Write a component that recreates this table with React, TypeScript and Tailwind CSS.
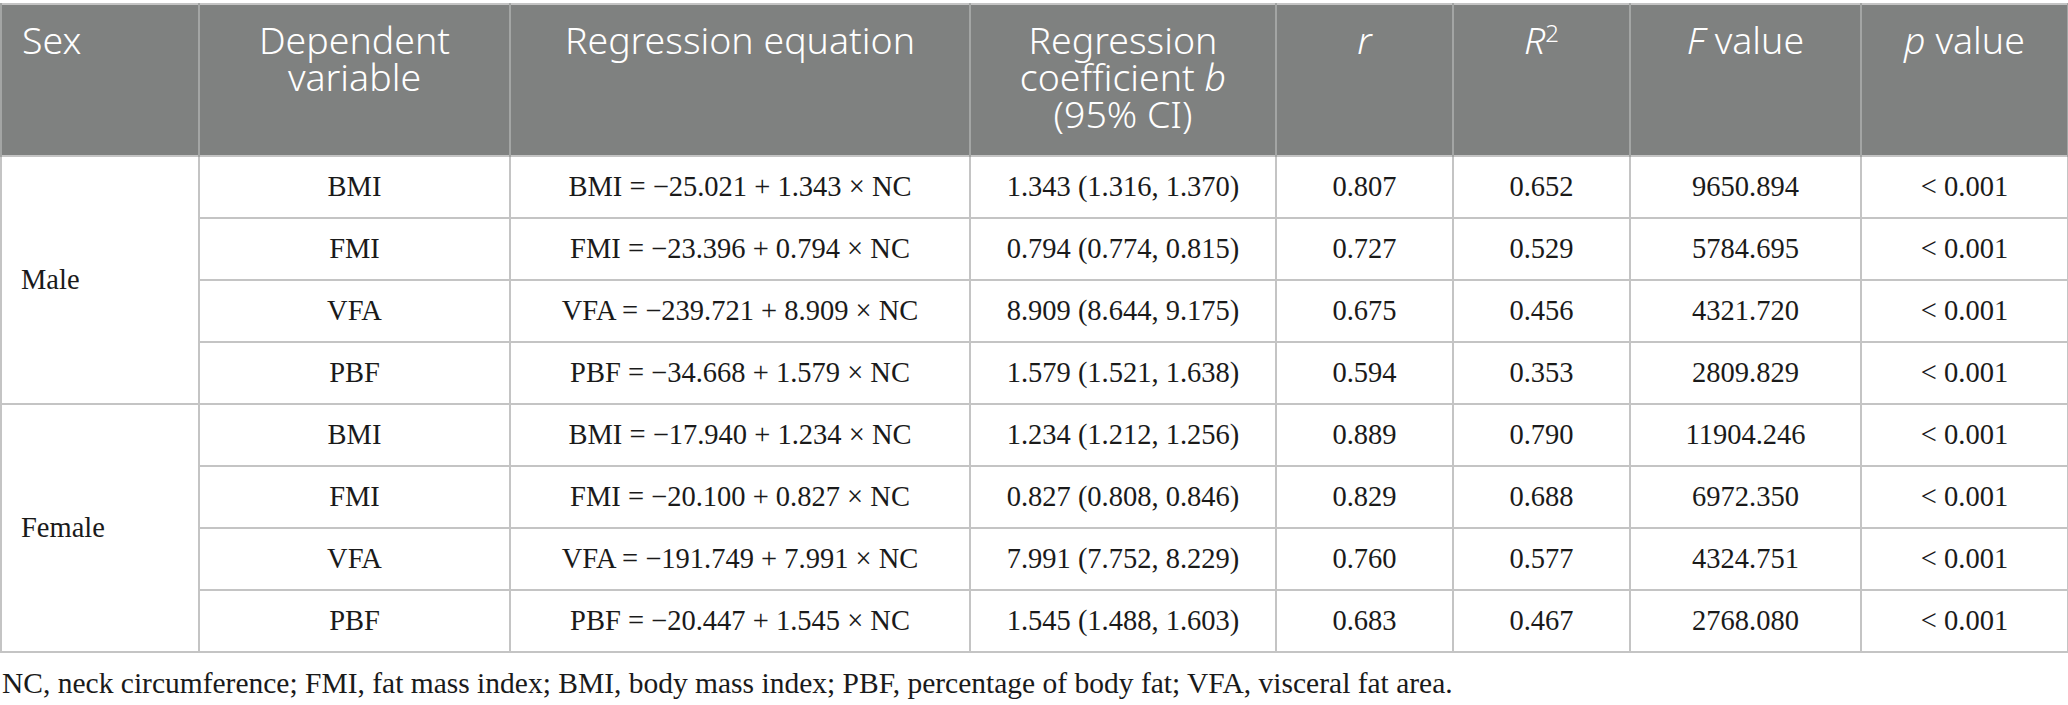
import React from "react";

type Row = {
  dep: string;
  eq: string;
  coef: string;
  r: string;
  r2: string;
  f: string;
  p: string;
};

const groups: { sex: string; rows: Row[] }[] = [
  {
    sex: "Male",
    rows: [
      { dep: "BMI", eq: "BMI = −25.021 + 1.343 × NC", coef: "1.343 (1.316, 1.370)", r: "0.807", r2: "0.652", f: "9650.894", p: "< 0.001" },
      { dep: "FMI", eq: "FMI = −23.396 + 0.794 × NC", coef: "0.794 (0.774, 0.815)", r: "0.727", r2: "0.529", f: "5784.695", p: "< 0.001" },
      { dep: "VFA", eq: "VFA = −239.721 + 8.909 × NC", coef: "8.909 (8.644, 9.175)", r: "0.675", r2: "0.456", f: "4321.720", p: "< 0.001" },
      { dep: "PBF", eq: "PBF = −34.668 + 1.579 × NC", coef: "1.579 (1.521, 1.638)", r: "0.594", r2: "0.353", f: "2809.829", p: "< 0.001" },
    ],
  },
  {
    sex: "Female",
    rows: [
      { dep: "BMI", eq: "BMI = −17.940 + 1.234 × NC", coef: "1.234 (1.212, 1.256)", r: "0.889", r2: "0.790", f: "11904.246", p: "< 0.001" },
      { dep: "FMI", eq: "FMI = −20.100 + 0.827 × NC", coef: "0.827 (0.808, 0.846)", r: "0.829", r2: "0.688", f: "6972.350", p: "< 0.001" },
      { dep: "VFA", eq: "VFA = −191.749 + 7.991 × NC", coef: "7.991 (7.752, 8.229)", r: "0.760", r2: "0.577", f: "4324.751", p: "< 0.001" },
      { dep: "PBF", eq: "PBF = −20.447 + 1.545 × NC", coef: "1.545 (1.488, 1.603)", r: "0.683", r2: "0.467", f: "2768.080", p: "< 0.001" },
    ],
  },
];

const th =
  "border-x-2 border-[#a3a5a4] align-top px-2 pt-[16px] font-light text-[37.5px] leading-[37px] text-white text-center";
const td = "border-2 border-[#c4c4c4] text-center";

export default function App() {
  return (
    <div className="bg-white pt-[3px] text-[#1a1a1a]">
      <table className="w-[2067px] table-fixed border-collapse border-2 border-[#c4c4c4]">
        <colgroup>
          <col className="w-[198px]" />
          <col className="w-[311px]" />
          <col className="w-[460px]" />
          <col className="w-[306px]" />
          <col className="w-[177px]" />
          <col className="w-[177px]" />
          <col className="w-[231px]" />
          <col className="w-[207px]" />
        </colgroup>
        <thead className="bg-[#7f8180] font-['Noto_Sans',sans-serif]">
          <tr className="h-[152px]">
            <th className={th + " !text-left !pl-[20px]"}>Sex</th>
            <th className={th}>Dependent variable</th>
            <th className={th}>Regression equation</th>
            <th className={th}>
              Regression
              <br />
              coefficient <i>b</i>
              <br />
              (95% CI)
            </th>
            <th className={th}>
              <i>r</i>
            </th>
            <th className={th}>
              <i>R</i>
              <sup className="text-[24px]">2</sup>
            </th>
            <th className={th}>
              <i>F</i> value
            </th>
            <th className={th}>
              <i>p</i> value
            </th>
          </tr>
        </thead>
        <tbody className="font-['Liberation_Serif',serif] text-[28.5px]">
          {groups.map((g) =>
            g.rows.map((row, i) => (
              <tr key={g.sex + row.dep} className="h-[62px]">
                {i === 0 && (
                  <td rowSpan={4} className="border-2 border-[#c4c4c4] pl-[19px] text-left">
                    {g.sex}
                  </td>
                )}
                <td className={td}>{row.dep}</td>
                <td className={td}>{row.eq}</td>
                <td className={td}>{row.coef}</td>
                <td className={td}>{row.r}</td>
                <td className={td}>{row.r2}</td>
                <td className={td}>{row.f}</td>
                <td className={td}>{row.p}</td>
              </tr>
            ))
          )}
        </tbody>
      </table>
      <p className="mt-[11px] pl-[2px] font-['Liberation_Serif',serif] text-[29.5px] leading-[38px]">
        NC, neck circumference; FMI, fat mass index; BMI, body mass index; PBF, percentage of body fat; VFA, visceral fat
        area.
      </p>
    </div>
  );
}
